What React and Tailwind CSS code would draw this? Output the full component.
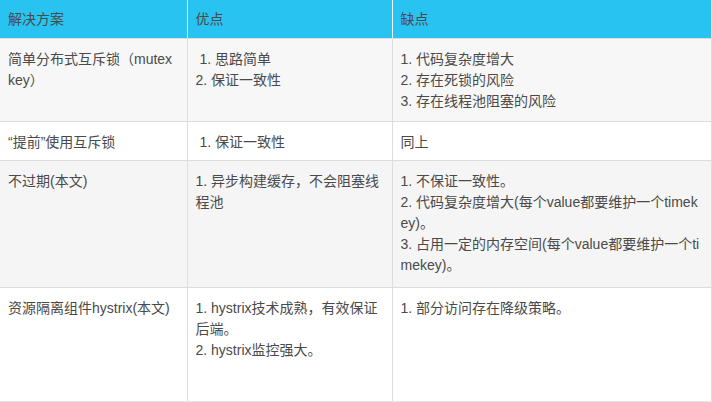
const rows = [
  {
    bg: "bg-[#f7f7f7]",
    h: "h-[83px]",
    solution: "简单分布式互斥锁（mutex key）",
    pros: ["\u00a01. 思路简单", "2. 保证一致性"],
    cons: ["1. 代码复杂度增大", "2. 存在死锁的风险", "3. 存在线程池阻塞的风险"],
  },
  {
    bg: "bg-white",
    h: "h-[39px]",
    solution: "“提前”使用互斥锁",
    pros: ["\u00a01. 保证一致性"],
    cons: ["同上"],
  },
  {
    bg: "bg-[#f5f5f5]",
    h: "h-[127px]",
    solution: "不过期(本文)",
    pros: ["1. 异步构建缓存，不会阻塞线程池"],
    cons: [
      "1. 不保证一致性。",
      "2. 代码复杂度增大(每个value都要维护一个timekey)。",
      "3. 占用一定的内存空间(每个value都要维护一个timekey)。",
    ],
  },
  {
    bg: "bg-white",
    h: "h-[114px]",
    solution: "资源隔离组件hystrix(本文)",
    pros: ["1. hystrix技术成熟，有效保证后端。", "2. hystrix监控强大。"],
    cons: ["1. 部分访问存在降级策略。"],
  },
];

const Lines = ({ items }) => (
  <>
    {items.map((t, i) => (
      <div key={i}>{t}</div>
    ))}
  </>
);

export default function App() {
  return (
    <div
      className="w-[712px] h-[402px] overflow-hidden bg-white text-[14px] leading-[21px] text-[#4a4a4a]"
      style={{ fontFamily: '"Liberation Sans", "Noto Sans CJK SC", sans-serif' }}
    >
      <table className="table-fixed border-collapse w-[711px]">
        <colgroup>
          <col className="w-[187px]" />
          <col className="w-[205px]" />
          <col className="w-[319px]" />
        </colgroup>
        <thead>
          <tr className="h-[38px] bg-[#29c3f2]">
            <th className="border-r border-b border-r-[#e8f4f8] border-b-[#dddddd] px-2 pt-[9px] text-left align-top font-normal text-[#4a4a4a]">
              解决方案
            </th>
            <th className="border-r border-b border-r-[#e8f4f8] border-b-[#dddddd] px-2 pt-[9px] text-left align-top font-normal text-[#4a4a4a]">
              优点
            </th>
            <th className="border-r border-b border-[#dddddd] px-2 pt-[9px] text-left align-top font-normal text-[#4a4a4a]">
              缺点
            </th>
          </tr>
        </thead>
        <tbody>
          {rows.map((r, i) => {
            const last = i === rows.length - 1;
            const line = last
              ? "border-r border-b border-r-[#dddddd] border-b-[#dfe7ee]"
              : "border-r border-b border-[#dddddd]";
            return (
              <tr key={i} className={`${r.bg} ${r.h}`}>
                <td className={`${line} px-2 pt-[10px] align-top`}>{r.solution}</td>
                <td className={`${line} px-2 pt-[10px] align-top`}>
                  <Lines items={r.pros} />
                </td>
                <td className={`${line} px-2 pt-[10px] align-top break-all`}>
                  <Lines items={r.cons} />
                </td>
              </tr>
            );
          })}
        </tbody>
      </table>
    </div>
  );
}
